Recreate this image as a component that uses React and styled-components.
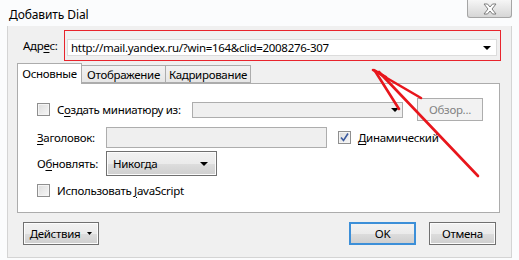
import React from 'react'
import styled, { createGlobalStyle } from 'styled-components'

const GlobalStyle = createGlobalStyle`
  html, body {
    margin: 0;
    padding: 0;
    background: #ffffff;
  }
  body {
    font-family: "Noto Sans", "Open Sans", sans-serif;
    font-size: 11.5px;
    letter-spacing: -0.3px;
    color: #000;
  }
`

const Window = styled.div`
  position: relative;
  width: 519px;
  height: 260px;
  background: #fbfcfd;
  display: flex;
  flex-direction: column;
  overflow: hidden;
`

const TitleBar = styled.div`
  height: 26px;
  flex: none;
  display: flex;
  align-items: flex-start;
  justify-content: space-between;
  padding: 0 7px 0 9px;
`

const Title = styled.div`
  margin-top: 6px;
  font-size: 12px;
  letter-spacing: -0.1px;
`

const CloseButton = styled.div`
  box-sizing: border-box;
  width: 45px;
  height: 18px;
  border: 1px solid #a5a5a5;
  border-top: none;
  border-radius: 0 0 3px 3px;
  background: linear-gradient(#f6f6f6, #e6e6e6 50%, #d6d6d6);
  display: flex;
  align-items: center;
  justify-content: center;
`

const Client = styled.div`
  flex: 1;
  margin: 0 7px 2px 7px;
  border: 1px solid #d4d4d4;
  border-top: none;
  background: #f0f0f0;
  display: flex;
  flex-direction: column;
`

const AddressRow = styled.div`
  display: flex;
  align-items: center;
  margin-top: 4px;
  padding-left: 15px;
`

const FieldLabel = styled.label`
  width: ${p => p.$w}px;
  flex: none;
  white-space: nowrap;
`

const Key = styled.span`
  text-decoration: underline;
  text-underline-offset: 2px;
`

const Highlight = styled.div`
  box-sizing: border-box;
  width: 437px;
  height: 31px;
  border: 1px solid #e8242c;
  padding: 8px 3px 4px 2px;
`

const AddressCombo = styled.div`
  box-sizing: border-box;
  height: 17px;
  background: #fff;
  border: 1px solid #dcdcdc;
  display: flex;
  align-items: center;
  padding: 0 5px 0 3px;
  white-space: nowrap;
`

const ComboText = styled.span`
  flex: 1;
`

const Arrow = styled.span`
  width: 0;
  height: 0;
  border-left: 4px solid transparent;
  border-right: 4px solid transparent;
  border-top: 4px solid #000;
  flex: none;
`

const TabStrip = styled.div`
  display: flex;
  align-items: flex-end;
  height: 22px;
  padding-left: 9px;
`

const Tab = styled.div`
  box-sizing: border-box;
  width: ${p => p.$w}px;
  height: ${p => p.$active ? 21 : 18}px;
  margin-left: -1px;
  margin-bottom: ${p => p.$active ? -1 : 0}px;
  position: relative;
  z-index: ${p => p.$active ? 2 : 1};
  border: 1px solid #acacac;
  border-bottom: ${p => p.$active ? 'none' : '1px solid #acacac'};
  background: ${p => p.$active ? '#fff' : 'linear-gradient(#f2f2f2, #e6e6e6)'};
  display: flex;
  align-items: center;
  justify-content: center;
  padding-bottom: ${p => p.$active ? 2 : 0}px;
  white-space: nowrap;
  &:first-child { margin-left: 0; }
`

const Panel = styled.div`
  box-sizing: border-box;
  height: 130px;
  margin: 0 11px 0 9px;
  border: 1px solid #acacac;
  background: #fff;
  padding: 14px 0 0 19px;
  display: flex;
  flex-direction: column;
`

const Row = styled.div`
  display: flex;
  align-items: center;
  height: ${p => p.$h}px;
  margin-bottom: ${p => p.$mb || 0}px;
`

const CheckWrap = styled.label`
  display: flex;
  align-items: center;
  gap: 7px;
  width: ${p => p.$w ? `${p.$w}px` : 'auto'};
  flex: none;
  white-space: nowrap;
`

const Box = styled.span`
  box-sizing: border-box;
  width: 13px;
  height: 13px;
  border: 1px solid #8f8f8f;
  background: linear-gradient(135deg, #dcdcdc, #f7f7f7);
  box-shadow: inset 0 0 0 1px #f4f4f4;
  display: flex;
  align-items: center;
  justify-content: center;
  flex: none;
`

const DisabledCombo = styled.div`
  box-sizing: border-box;
  width: 211px;
  height: 16px;
  border: 1px solid #adadad;
  background: #efefef;
  display: flex;
  align-items: center;
  justify-content: flex-end;
  padding-right: 3px;
`

const TextInput = styled.div`
  box-sizing: border-box;
  width: 221px;
  height: 21px;
  border: 1px solid #adadad;
  background: #efefef;
  margin-right: 11px;
`

const Button = styled.div`
  box-sizing: border-box;
  width: ${p => p.$w}px;
  height: 23px;
  margin-left: ${p => p.$ml || 0}px;
  border: ${p => p.$default ? '2px solid #3c8fd8' : '1px solid #707070'};
  background: ${p => p.$disabled ? '#f2f2f2' : 'linear-gradient(#f2f2f2, #ebebeb 50%, #dddddd 51%, #cfcfcf)'};
  border-color: ${p => p.$disabled ? '#adadad' : undefined};
  color: ${p => p.$disabled ? '#838383' : '#000'};
  box-shadow: ${p => p.$disabled || p.$default ? 'none' : 'inset 0 0 0 1px #fcfcfc'};
  display: flex;
  align-items: center;
  justify-content: center;
  gap: 7px;
  white-space: nowrap;
  flex: none;
`

const Select = styled.div`
  box-sizing: border-box;
  width: 111px;
  height: 25px;
  border: 1px solid #707070;
  background: linear-gradient(#f2f2f2, #ebebeb 50%, #dddddd 51%, #cfcfcf);
  box-shadow: inset 0 0 0 1px #fcfcfc;
  display: flex;
  align-items: center;
  padding: 0 8px 0 6px;
`

const Footer = styled.div`
  display: flex;
  align-items: center;
  margin-top: 9px;
  padding: 0 15px;
  gap: 13px;
`

const Spacer = styled.div`
  flex: 1;
`

const Overlay = styled.svg`
  position: absolute;
  left: 0;
  top: 0;
  pointer-events: none;
`

function CheckBox({ checked }) {
  return (
    <Box>
      {checked && (
        <svg width="9" height="9" viewBox="0 0 9 9">
          <path d="M1 4.5 L3.5 7.5 L8 0.5" fill="none" stroke="#3b5a9e" strokeWidth="1.6" />
        </svg>
      )}
    </Box>
  )
}

export default function App() {
  return (
    <Window>
      <GlobalStyle />
      <TitleBar>
        <Title>Добавить Dial</Title>
        <CloseButton>
          <svg width="16" height="12" viewBox="0 0 16 12">
            <path
              d="M2 1 H5.5 L8 4 L10.5 1 H14 L10 6 L14 11 H10.5 L8 8 L5.5 11 H2 L6 6 Z"
              fill="#ffffff"
              stroke="#7d7d7d"
              strokeWidth="1"
              strokeLinejoin="round"
            />
          </svg>
        </CloseButton>
      </TitleBar>

      <Client>
        <AddressRow>
          <FieldLabel $w={41}>Адр<Key>е</Key>с:</FieldLabel>
          <Highlight>
            <AddressCombo>
              <ComboText>http://mail.yandex.ru/?win=164&amp;clid=2008276-307</ComboText>
              <Arrow />
            </AddressCombo>
          </Highlight>
        </AddressRow>

        <TabStrip>
          <Tab $active $w={65}>Основные</Tab>
          <Tab $w={85}>Отображение</Tab>
          <Tab $w={86}>Кадрирование</Tab>
        </TabStrip>

        <Panel>
          <Row $h={23} $mb={6}>
            <CheckWrap $w={155}>
              <CheckBox />
              <span>С<Key>о</Key>здать миниатюру из:</span>
            </CheckWrap>
            <DisabledCombo>
              <Arrow />
            </DisabledCombo>
            <Button $w={66} $ml={14} $disabled>Обзор...</Button>
          </Row>

          <Row $h={21} $mb={3}>
            <FieldLabel $w={69}><Key>З</Key>аголовок:</FieldLabel>
            <TextInput />
            <CheckWrap>
              <CheckBox checked />
              <span><Key>Д</Key>инамический</span>
            </CheckWrap>
          </Row>

          <Row $h={25} $mb={6}>
            <FieldLabel $w={69}>О<Key>б</Key>новлять:</FieldLabel>
            <Select>
              <ComboText>Никогда</ComboText>
              <Arrow />
            </Select>
          </Row>

          <Row $h={16}>
            <CheckWrap>
              <CheckBox />
              <span>Использовать <Key>J</Key>avaScript</span>
            </CheckWrap>
          </Row>
        </Panel>

        <Footer>
          <Button $w={76}>
            Действия
            <svg width="5" height="3" viewBox="0 0 5 3">
              <path d="M0 0 H5 L2.5 3 Z" fill="#000" />
            </svg>
          </Button>
          <Spacer />
          <Button $w={67} $default>OK</Button>
          <Button $w={67}>Отмена</Button>
        </Footer>
      </Client>

      <Overlay width="519" height="260" viewBox="0 0 519 260">
        <g fill="none" stroke="#e8161c" strokeWidth="2.6" strokeLinecap="round" strokeLinejoin="round">
          <path d="M373 70 L421 98" />
          <path d="M375 71 L399 109" />
          <path d="M379 72 L478 176" />
          <path d="M374 70 L386 77" />
        </g>
      </Overlay>
    </Window>
  )
}
